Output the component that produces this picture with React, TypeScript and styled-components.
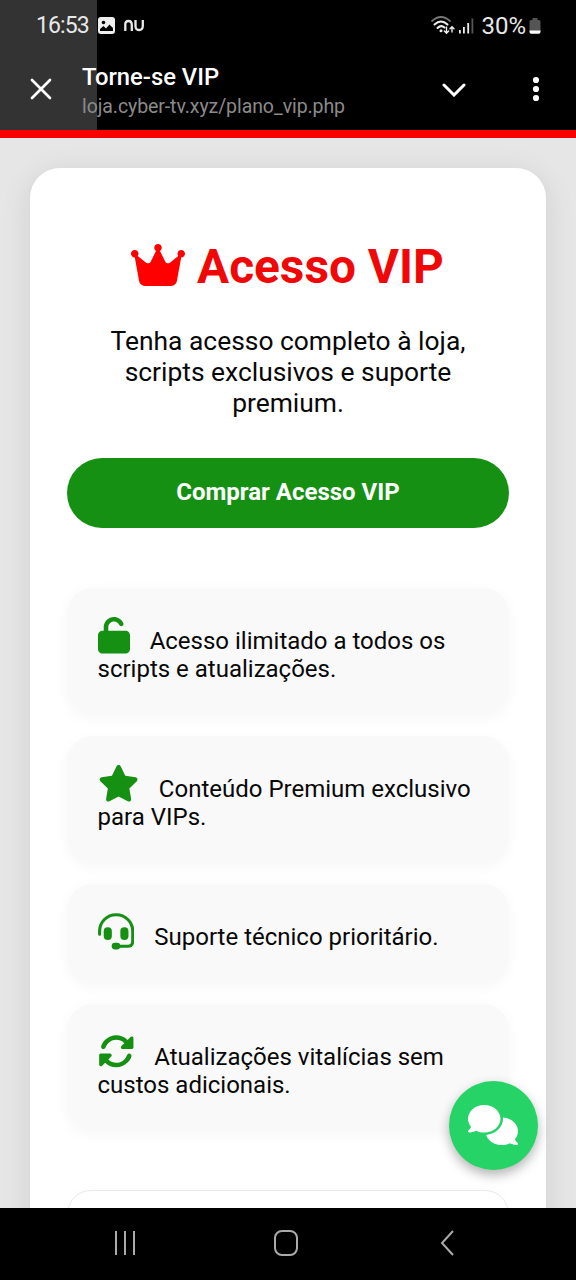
import React from 'react';
import styled, { createGlobalStyle } from 'styled-components';
import { FaComments, FaCrown, FaRotate, FaStar, FaUnlock } from 'react-icons/fa6';

const GlobalStyle = createGlobalStyle`
  * { box-sizing: border-box; }
  body { margin: 0; background: #000; font-family: Roboto, sans-serif; }
`;

const Screen = styled.div`
  position: relative;
  display: flex;
  flex-direction: column;
  width: 576px;
  height: 1280px;
  overflow: hidden;
  background: #000;
`;

const Header = styled.header`
  height: 130px;
  flex: none;
  color: #fff;
  background: linear-gradient(to right, #333 97px, #000 97px);
`;

const StatusBar = styled.div`
  display: flex;
  align-items: center;
  justify-content: space-between;
  height: 50px;
  padding: 1px 35px 0 36px;
  font-size: 23px;
  color: #e8e8e8;
`;

const StatusGroup = styled.div<{ $gap: number }>`
  display: flex;
  align-items: center;
  gap: ${p => p.$gap}px;
`;

const StatusText = styled.span<{ $spacing: number }>`
  letter-spacing: ${p => p.$spacing}px;
`;

const BatteryLevel = styled.span`
  margin: 0 -1px 0 3px;
  font-size: 24px;
`;

const BrowserBar = styled.div`
  display: flex;
  align-items: center;
  height: 80px;
  padding: 0 30px 2px 29px;
`;

const PageInfo = styled.div`
  flex: 1;
  padding: 5px 0 0 29px;
`;

const PageTitle = styled.div`
  font-size: 23.8px;
  line-height: 29px;
  font-weight: 500;
`;

const PageUrl = styled.div`
  font-size: 19.5px;
  line-height: 29px;
  letter-spacing: -0.08px;
  color: #8b8b8b;
`;

const MenuIcon = styled.svg`
  margin-left: 59px;
`;

const Page = styled.main`
  flex: 1;
  min-height: 0;
  overflow: hidden;
  padding: 30px 30px 0;
  border-top: 8px solid #f80000;
  background: #e6e6e6;
`;

const Card = styled.section`
  height: 1200px;
  padding: 71px 37px 0;
  border-radius: 30px;
  background: #fff;
  box-shadow: 0 6px 30px rgba(0, 0, 0, 0.1);
  text-align: center;
`;

const Heading = styled.h1`
  margin: 0;
  font-size: 47.8px;
  line-height: 56px;
  font-weight: 700;
  white-space: nowrap;
  color: #f00808;
`;

const CrownIcon = styled(FaCrown)`
  width: 54px;
  height: 48px;
  margin-left: -1px;
  vertical-align: -6px;
  color: #f00;
`;

const Lead = styled.p`
  margin: 31px 0 0;
  padding: 0 37px;
  font-size: 26.4px;
  line-height: 31.2px;
  color: #080808;
`;

const BuyButton = styled.button`
  display: block;
  width: 100%;
  height: 70px;
  margin-top: 38.4px;
  padding: 0 0 2px;
  border: 0;
  border-radius: 35px;
  background: #159013;
  color: #fff;
  font: 700 24px Roboto, sans-serif;
`;

const Benefits = styled.ul`
  display: flex;
  flex-direction: column;
  gap: 22px;
  margin: 60px 0 0;
  padding: 0;
  list-style: none;
`;

const Benefit = styled.li<{ $tall: boolean }>`
  height: ${p => (p.$tall ? 126 : 98)}px;
  padding: 29px 29px 0 30.5px;
  border-radius: 26px;
  background: #f9f9f9;
  box-shadow: 0 4px 15px rgba(0, 0, 0, 0.04);
  text-align: left;
  font-size: 24px;
  line-height: 28px;
  color: #080808;
`;

const BenefitIcon = styled.span<{ $width: number }>`
  margin-right: 14.2px;
  font-size: 36.6px;
  line-height: 28px;
  color: #159013;

  svg {
    width: ${p => p.$width}px;
    vertical-align: -0.125em;
  }
`;

const PlanBox = styled.div`
  height: 120px;
  margin-top: 60px;
  border: 1.5px solid #e9e9e9;
  border-radius: 24px;
  box-shadow: 0 0 15px rgba(0, 0, 0, 0.02);
`;

const ChatButton = styled.button`
  position: absolute;
  left: 449px;
  top: 1081px;
  display: grid;
  place-items: center;
  width: 89px;
  height: 89px;
  padding: 0 1px 1px 0;
  border: 0;
  border-radius: 50%;
  background: #25d366;
  box-shadow: 0 5px 12px rgba(0, 0, 0, 0.3);
  color: #fff;

  svg {
    width: 50px;
    height: 40px;
  }
`;

const NavBar = styled.nav`
  display: flex;
  flex: none;
  align-items: center;
  justify-content: space-between;
  height: 72px;
  padding: 0 119px 3px 112px;
`;

const HomeIcon = styled.svg`
  margin-right: 5px;
`;

const HeadsetIcon = () => (
  <svg height="1em" viewBox="0 0 37 37" fill="currentColor">
    <path
      d="M1.6 21.5V18.5C1.6 9 9 1.7 18.3 1.7S35.1 9 35.1 18.5V28.5Q35.1 33.6 30 33.6H18"
      fill="none"
      stroke="currentColor"
      strokeWidth="3.1"
      strokeLinecap="round"
    />
    <rect x="5.8" y="14.5" width="8.2" height="12.8" rx="4" />
    <rect x="22.6" y="14.5" width="8.2" height="12.8" rx="4" />
    <rect x="13.8" y="30" width="8.8" height="6.8" rx="3.4" />
  </svg>
);

const benefits = [
  { icon: FaUnlock, width: 32, text: 'Acesso ilimitado a todos os scripts e atualizações.', tall: true },
  { icon: FaStar, width: 41.2, text: 'Conteúdo Premium exclusivo para VIPs.', tall: true },
  { icon: HeadsetIcon, width: 36.6, text: 'Suporte técnico prioritário.', tall: false },
  { icon: FaRotate, width: 36.6, text: 'Atualizações vitalícias sem custos adicionais.', tall: true },
];

const PictureIcon = () => (
  <svg width="17" height="17" viewBox="0 0 17 17">
    <rect width="17" height="17" rx="3" fill="#eee" />
    <circle cx="5.5" cy="5.5" r="1.8" fill="#000" />
    <path d="M2 14V12L5.5 9 8 11.5 11.5 7.5 15 11V14Z" fill="#000" />
  </svg>
);

const NuIcon = () => (
  <svg width="21" height="14" viewBox="0 0 21 14" fill="none" stroke="#e8e8e8" strokeWidth="2.3">
    <path d="M1.3 12V5Q1.3 2 4.4 2Q7.8 2 7.8 6V12" />
    <path d="M11.5 1V7Q11.5 11 15 11Q18.8 11 18.8 7V1" />
  </svg>
);

const WifiIcon = () => (
  <svg width="24" height="19" viewBox="0 0 24 19" fill="none" strokeLinecap="round">
    <path d="M1 5Q10-3 19 5" stroke="#777" strokeWidth="1.7" />
    <path d="M3.5 8.5Q10 2.5 16.5 8.5" stroke="#eee" strokeWidth="2" />
    <path d="M6.5 12Q10 8.5 13.5 11.5" stroke="#eee" strokeWidth="2" />
    <circle cx="10" cy="14.7" r="1.5" fill="#eee" />
    <path d="M15.5 11V17M13.3 15 15.5 17.2 17.7 15M21 16V11M19 12.8 21 10.8 23 12.8" stroke="#eee" strokeWidth="1.4" />
  </svg>
);

const SignalIcon = () => (
  <svg width="15" height="16" viewBox="0 0 15 16">
    <rect x="0" y="12" width="1.8" height="3.5" fill="#eee" />
    <rect x="4" y="9" width="1.8" height="6.5" fill="#eee" />
    <rect x="8.3" y="5" width="1.8" height="10.5" fill="#eee" />
    <rect x="12.5" y="0.5" width="1.8" height="15" fill="#555" />
  </svg>
);

const BatteryIcon = () => (
  <svg width="12" height="16" viewBox="0 0 12 16">
    <path d="M3.5 0h5v2H10q1.5 0 1.5 1.5V13H.5V3.5Q.5 2 2 2h1.5Z" fill="#555" />
    <path d="M.5 12.5h11V14q0 1.7-1.7 1.7H2.2Q.5 15.7.5 14Z" fill="#fff" />
  </svg>
);

export default function App() {
  return (
    <Screen>
      <GlobalStyle />
      <Header>
        <StatusBar>
          <StatusGroup $gap={9}>
            <StatusText $spacing={-0.9}>16:53</StatusText>
            <PictureIcon />
            <NuIcon />
          </StatusGroup>
          <StatusGroup $gap={4}>
            <WifiIcon />
            <SignalIcon />
            <BatteryLevel>30%</BatteryLevel>
            <BatteryIcon />
          </StatusGroup>
        </StatusBar>
        <BrowserBar>
          <svg width="24" height="24" viewBox="0 0 24 24" stroke="#fff" strokeWidth="2.7" strokeLinecap="round">
            <path d="M3 3 21 21M21 3 3 21" />
          </svg>
          <PageInfo>
            <PageTitle>Torne-se VIP</PageTitle>
            <PageUrl>loja.cyber-tv.xyz/plano_vip.php</PageUrl>
          </PageInfo>
          <svg width="26" height="16" viewBox="0 0 26 16" fill="none" stroke="#fff" strokeWidth="3" strokeLinecap="round">
            <path d="M3 4 13 14 23 4" />
          </svg>
          <MenuIcon width="20" height="26" viewBox="0 0 20 26" fill="#fff">
            <circle cx="10" cy="4" r="3.1" />
            <circle cx="10" cy="13" r="3.1" />
            <circle cx="10" cy="22" r="3.1" />
          </MenuIcon>
        </BrowserBar>
      </Header>
      <Page>
        <Card>
          <Heading>
            <CrownIcon /> Acesso VIP
          </Heading>
          <Lead>Tenha acesso completo à loja, scripts exclusivos e suporte premium.</Lead>
          <BuyButton>Comprar Acesso VIP</BuyButton>
          <Benefits>
            {benefits.map(({ icon: Icon, width, text, tall }) => (
              <Benefit key={text} $tall={tall}>
                <BenefitIcon $width={width}>
                  <Icon />
                </BenefitIcon>{' '}
                {text}
              </Benefit>
            ))}
          </Benefits>
          <PlanBox />
        </Card>
      </Page>
      <ChatButton aria-label="Chat">
        <FaComments />
      </ChatButton>
      <NavBar>
        <svg width="26" height="26" viewBox="0 0 26 26" stroke="#aaa" strokeWidth="2">
          <path d="M4 1V25M13 1V25M22 1V25" />
        </svg>
        <HomeIcon width="26" height="28" viewBox="0 0 26 28" fill="none" stroke="#aaa" strokeWidth="2">
          <rect x="2" y="2" width="22" height="24" rx="7" />
        </HomeIcon>
        <svg width="18" height="28" viewBox="0 0 18 28" fill="none" stroke="#aaa" strokeWidth="2">
          <path d="M14 2 3 14 14 26" />
        </svg>
      </NavBar>
    </Screen>
  );
}
